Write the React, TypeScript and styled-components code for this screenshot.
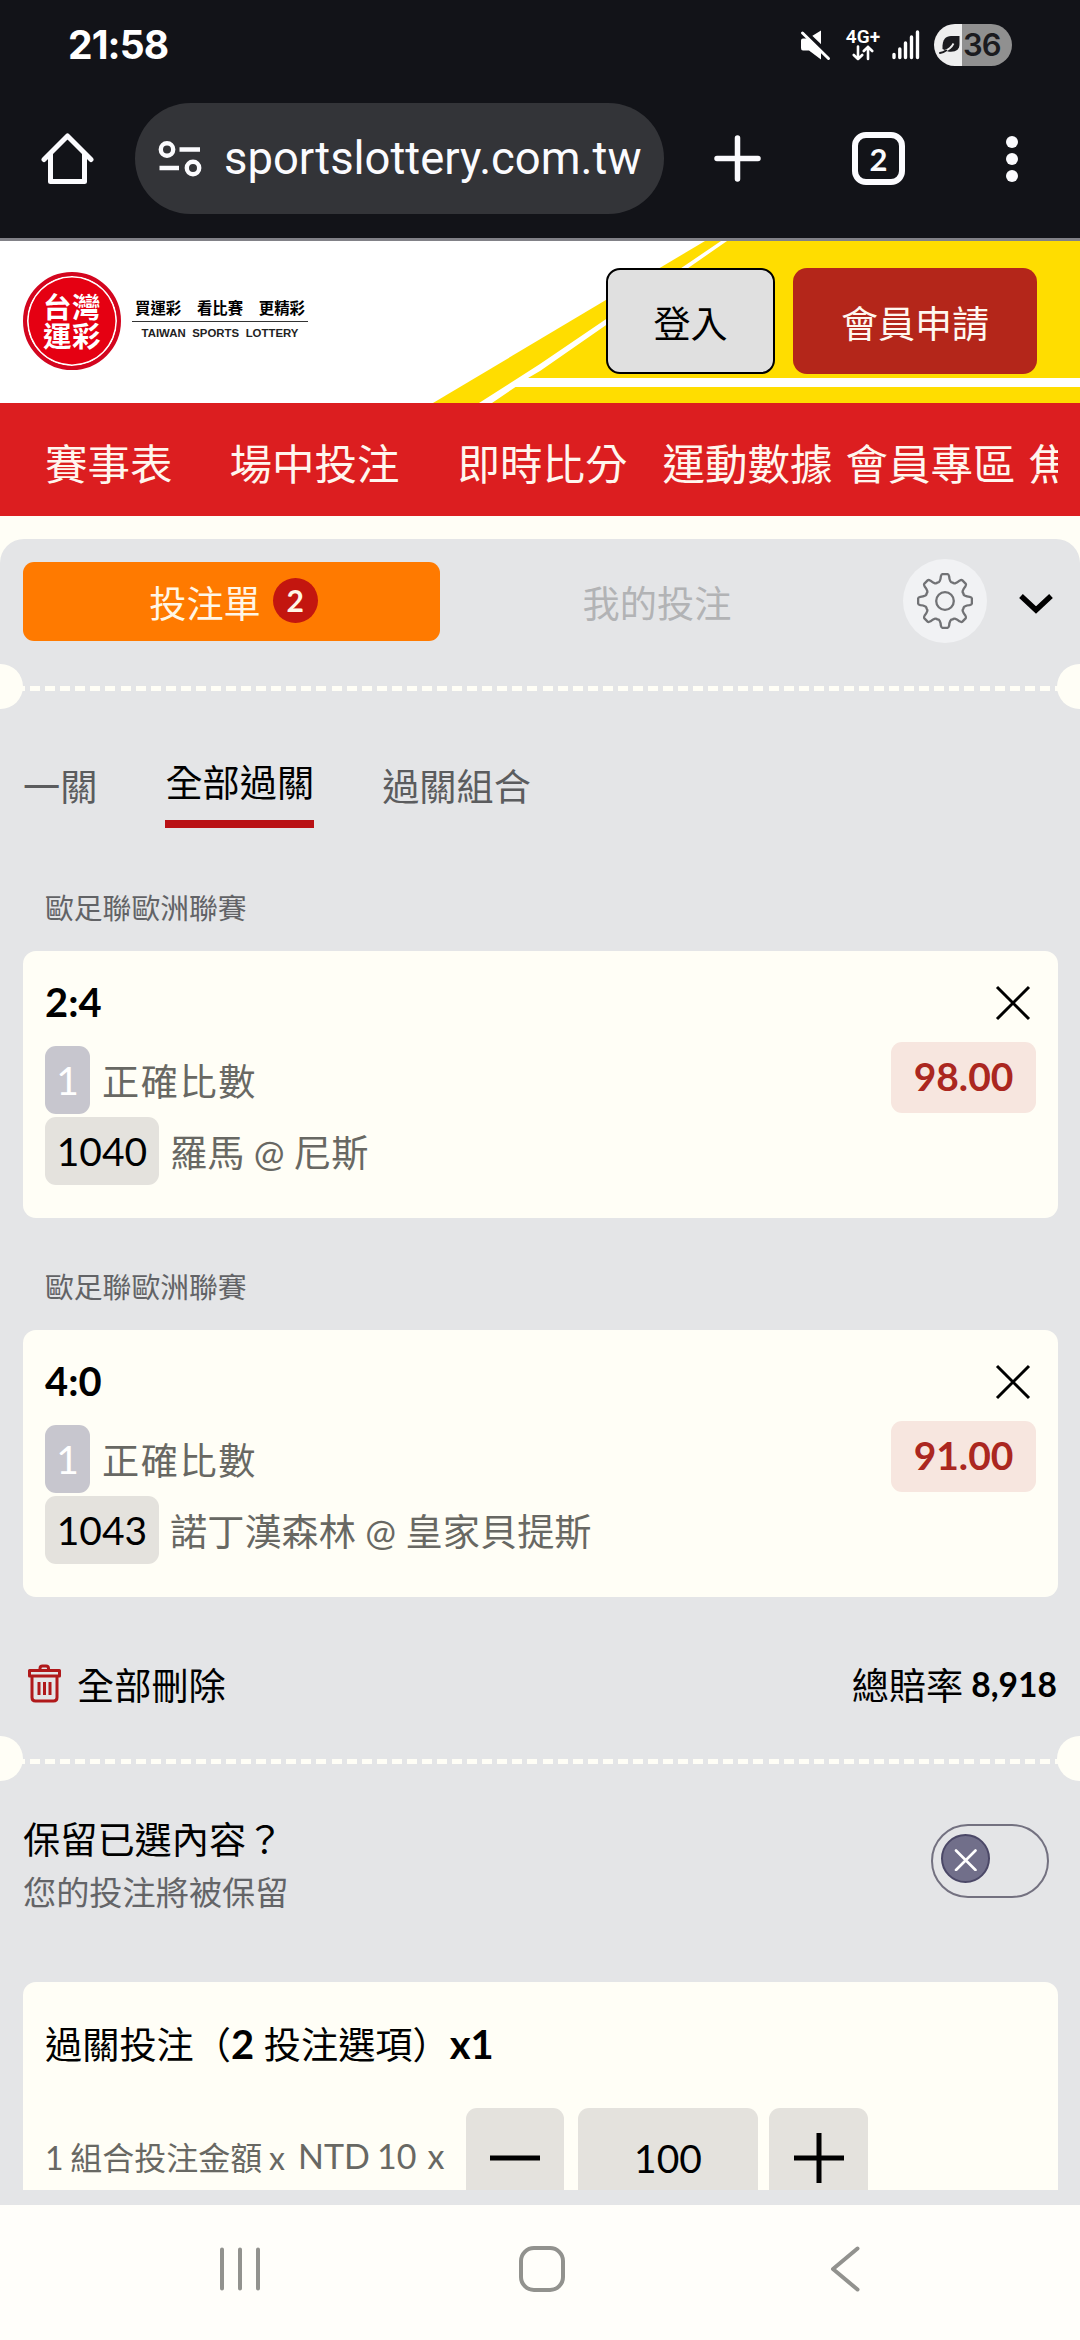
import React from "react";
import styled, { createGlobalStyle } from "styled-components";

const cjk = `"Noto Sans CJK TC", "Noto Sans CJK JP", sans-serif`;
const latin = `Lato, "Noto Sans CJK TC", sans-serif`;
const cream = "#fffef6";
const panel = "#e4e5e7";

const GlobalStyle = createGlobalStyle`
  * { box-sizing: border-box; }
  body { margin: 0; background: ${cream}; }
`;

const Screen = styled.div`
  width: 1080px;
  height: 2340px;
  overflow: hidden;
  display: flex;
  flex-direction: column;
  background: ${cream};
  font-family: ${cjk};
  color: #000;
`;

const Label = styled.span<{ $size: number; $color?: string; $bold?: boolean; $latin?: boolean; $track?: number }>`
  font-family: ${(p) => (p.$latin ? latin : cjk)};
  font-size: ${(p) => p.$size}px;
  font-weight: ${(p) => (p.$bold ? 700 : 400)};
  letter-spacing: ${(p) => p.$track ?? 0}px;
  line-height: 48px;
  color: ${(p) => p.$color ?? "#000"};
  white-space: nowrap;
  flex: none;
`;

/* ---------- device chrome ---------- */

const StatusBar = styled.div`
  height: 90px;
  flex: none;
  background: #121318;
  display: flex;
  align-items: center;
  justify-content: space-between;
  padding: 0 68px;
`;

const Clock = styled.span`
  font: 700 39px/48px Inter, sans-serif;
  letter-spacing: -0.9px;
  color: #fff;
`;

const StatusIcons = styled.div`
  display: flex;
  align-items: center;
`;

const Network = styled.div`
  display: flex;
  flex-direction: column;
  align-items: center;
  width: 36px;
  margin: 0 11px 0 14px;
  font: 600 19px/16px Roboto, sans-serif;
  color: #fff;
`;

const Battery = styled.div`
  width: 78px;
  height: 42px;
  margin-left: 14px;
  border-radius: 21px;
  background: linear-gradient(90deg, #eeeeee 28px, #909090 28px);
  display: flex;
  align-items: center;
  padding-left: 5px;
  font: 600 31px/42px Inter, sans-serif;
  letter-spacing: -1px;
  color: #1b1b1f;
`;

const BrowserBar = styled.div`
  height: 151px;
  flex: none;
  background: #121318;
  border-bottom: 3px solid #818187;
  display: flex;
  align-items: center;
  padding: 0 0 11px 41px;
`;

const AddressPill = styled.div`
  width: 529px;
  height: 111px;
  margin: 0 50px 0 41px;
  border-radius: 56px;
  background: #333438;
  display: flex;
  align-items: center;
  padding-left: 22px;
  gap: 22px;
`;

const Url = styled.span`
  font: 400 45.4px/56px Roboto, sans-serif;
  color: #fbfbfe;
  white-space: nowrap;
`;

const TabCount = styled.div`
  width: 53px;
  height: 53px;
  margin: 0 100px 0 91px;
  border: 6px solid #fbfbfe;
  border-radius: 14px;
  display: grid;
  place-items: center;
  font: 700 31px/40px Lato, sans-serif;
  color: #fbfbfe;
`;

const SystemNav = styled.div`
  height: 135px;
  flex: none;
  background: #fffefa;
  display: flex;
  align-items: center;
  padding: 0 0 7px 219px;
`;

const BackIcon = styled.svg`
  margin-left: 265px;
`;

const HomeSquare = styled.div`
  width: 46px;
  height: 46px;
  margin-left: 258px;
  border: 4px solid #92928e;
  border-radius: 15px;
`;

/* ---------- site header ---------- */

const Header = styled.header`
  height: 162px;
  flex: none;
  background: #fff;
  position: relative;
  display: flex;
  align-items: center;
  padding: 0 43px 2px 23px;
`;

const HeaderArt = styled.svg`
  position: absolute;
  inset: 0;
`;

const Seal = styled.div`
  width: 98px;
  height: 98px;
  border-radius: 50%;
  background: #e50012;
  border: 4px solid #d3061f;
  box-shadow: inset 0 0 0 1.6px #fff;
  display: grid;
  place-content: center;
  text-align: center;
  font: 700 28.5px/29.5px ${cjk};
  letter-spacing: 0.5px;
  color: #fff;
  padding-bottom: 2px;
`;

const Brand = styled.div`
  width: 176px;
  margin: 0 298px 6px 11px;
  display: flex;
  flex-direction: column;
  align-items: center;
`;

const Slogan = styled.div`
  width: 170px;
  height: 24px;
  display: flex;
  justify-content: space-between;
  font: 700 15.4px/20px ${cjk};
`;

const BrandName = styled.div`
  width: 176px;
  border-top: 1px solid #333;
  text-align: center;
  font: 700 11.4px/12px "Liberation Sans", sans-serif;
  padding-top: 5px;
  word-spacing: 3.4px;
  color: #222;
  white-space: nowrap;
`;

const HeaderButton = styled.button<{ $primary?: boolean }>`
  position: relative;
  width: ${(p) => (p.$primary ? 244 : 169)}px;
  height: 106px;
  margin-left: ${(p) => (p.$primary ? 18 : 0)}px;
  border: ${(p) => (p.$primary ? "none" : "2px solid #000")};
  border-radius: 14px;
  background: ${(p) => (p.$primary ? "#b4261a" : "#e0e0e0")};
  color: ${(p) => (p.$primary ? "#fff8f0" : "#000")};
  font: 400 37px/44px ${cjk};
  padding: 1px 0 0;
  white-space: nowrap;
`;

const MainNav = styled.nav`
  height: 113px;
  flex: none;
  background: #dc1e20;
  padding: 5px 22px 0 45px;
`;

const NavTrack = styled.div`
  height: 107px;
  overflow: hidden;
  display: flex;
  align-items: center;
`;

const NavItem = styled.a<{ $gap: number }>`
  flex: none;
  margin-right: ${(p) => p.$gap}px;
  font: 400 42.5px/56px ${cjk};
  color: #fff6ee;
`;

/* ---------- bet slip ---------- */

const Slip = styled.main`
  height: 1666px;
  flex: none;
  margin-top: 23px;
  overflow: hidden;
  border-radius: 24px 24px 0 0;
  background: ${panel};
  display: flex;
  flex-direction: column;
`;

const SlipTabs = styled.div`
  height: 125px;
  flex: none;
  display: flex;
  align-items: center;
  padding: 0 27px 1px 23px;
`;

const SlipTab = styled.div<{ $active?: boolean }>`
  width: ${(p) => (p.$active ? 417 : 434)}px;
  height: 79px;
  border-radius: 11px;
  background: ${(p) => (p.$active ? "#ff7a00" : "transparent")};
  display: flex;
  align-items: center;
  justify-content: center;
  gap: 12px;
  padding: 2px 0 0 ${(p) => (p.$active ? 4 : 0)}px;
`;

const CountBadge = styled.span`
  width: 45px;
  height: 45px;
  margin-top: -3px;
  border-radius: 50%;
  background: #c3160f;
  display: grid;
  place-items: center;
  font: 700 30px/45px Lato, sans-serif;
  color: #fff6e6;
`;

const GearButton = styled.div`
  width: 84px;
  height: 84px;
  margin: 0 32px 0 29px;
  border-radius: 50%;
  background: #f1f2f4;
  display: grid;
  place-items: center;
`;

const Chevron = styled.svg`
  margin-top: 5px;
`;

const Perforation = styled.div<{ $line: number }>`
  height: 45px;
  flex: none;
  position: relative;
  display: flex;
  justify-content: space-between;
  &::before {
    content: "";
    position: absolute;
    left: 0;
    right: 0;
    top: ${(p) => p.$line}px;
    height: 5px;
    background: repeating-linear-gradient(90deg, ${cream} 0 10px, transparent 10px 15.07px);
  }
`;

const Notch = styled.i<{ $right?: boolean }>`
  width: 23px;
  height: 45px;
  background: ${cream};
  border-radius: ${(p) => (p.$right ? "23px 0 0 23px" : "0 23px 23px 0")};
`;

const ModeTabs = styled.div`
  height: 119px;
  flex: none;
  display: flex;
  align-items: flex-end;
  gap: 68px;
  padding-left: 23px;
`;

const ModeTab = styled.div<{ $active?: boolean }>`
  height: 72px;
  border-bottom: 8px solid ${(p) => (p.$active ? "#b91115" : "transparent")};
  padding-top: ${(p) => (p.$active ? 1 : 5)}px;
`;

const League = styled.div<{ $first?: boolean }>`
  height: ${(p) => (p.$first ? 123 : 112)}px;
  flex: none;
  padding: ${(p) => (p.$first ? 55 : 44)}px 0 0 45px;
`;

const Card = styled.section`
  height: 267px;
  flex: none;
  margin: 0 22px 0 23px;
  border-radius: 13px;
  background: ${cream};
  padding: 27px 22px 0 22px;
  display: grid;
  grid-template-columns: 1fr auto;
  grid-template-rows: 68px 71px 70px;
`;

const Line = styled.div<{ $gap: number }>`
  display: flex;
  align-items: flex-start;
  gap: ${(p) => p.$gap}px;
`;

const CloseIcon = styled.svg`
  margin: 7px 5px 0 auto;
`;

const Tag = styled.span<{ $muted?: boolean }>`
  width: ${(p) => (p.$muted ? 45 : 114)}px;
  height: 68px;
  border-radius: 11px;
  background: ${(p) => (p.$muted ? "#c7c6ce" : "#e4e2dd")};
  color: ${(p) => (p.$muted ? "#fff" : "#000")};
  font: 400 39px/68px Lato, sans-serif;
  text-align: center;
`;

const Odds = styled.span`
  width: 145px;
  height: 71px;
  margin-top: -4px;
  border-radius: 11px;
  background: #f7e6df;
  color: #ab2720;
  font: 700 39px/69px Lato, sans-serif;
  text-align: center;
`;

const TagText = styled.div`
  padding-top: 10px;
  display: flex;
  align-items: baseline;
`;

const Summary = styled.div`
  height: 139px;
  flex: none;
  display: flex;
  align-items: center;
  padding: 34px 23px 0 28px;
  gap: 16px;
`;

const TotalOdds = styled.div`
  margin-left: auto;
  display: flex;
  align-items: center;
  gap: 8px;
`;

const KeepRow = styled.div`
  height: 201px;
  flex: none;
  display: flex;
  padding: 31px 31px 0 23px;
  justify-content: space-between;
`;

const KeepText = styled.div`
  display: flex;
  flex-direction: column;
  gap: 5px;
  padding-top: 2px;
`;

const Toggle = styled.div`
  width: 118px;
  height: 74px;
  margin-top: 12px;
  border: 2px solid #737180;
  border-radius: 37px;
  padding: 8px;
`;

const Knob = styled.div`
  width: 49px;
  height: 49px;
  border: 2px solid #4b4867;
  border-radius: 50%;
  background: #716f8a;
  display: grid;
  place-items: center;
`;

const StakeCard = styled.section`
  height: 208px;
  flex: none;
  overflow: hidden;
  margin: 0 22px 0 23px;
  border-radius: 13px 13px 0 0;
  background: ${cream};
  padding: 37px 22px 0 22px;
`;

const StakeTitle = styled.div`
  height: 89px;
  display: flex;
  align-items: baseline;
`;

const StakeRow = styled.div`
  height: 100px;
  display: flex;
`;

const StakeText = styled.div<{ $width: number; $top: number }>`
  width: ${(p) => p.$width}px;
  padding-top: ${(p) => p.$top}px;
  flex: none;
  display: flex;
  gap: 11px;
  word-spacing: -1.5px;
`;

const StepButton = styled.div<{ $width: number; $gap?: number }>`
  width: ${(p) => p.$width}px;
  height: 100px;
  margin-right: ${(p) => p.$gap ?? 0}px;
  border-radius: 11px;
  background: #e4e2dd;
  display: grid;
  place-items: center;
  font: 400 39px/100px Lato, sans-serif;
`;

function gearPath() {
  const at = (deg: number, r: number) => {
    const a = (deg * Math.PI) / 180;
    return `${(29 + r * Math.sin(a)).toFixed(2)} ${(29 - r * Math.cos(a)).toFixed(2)}`;
  };
  let d = "";
  for (let i = 0; i < 8; i++) {
    const t = i * 45;
    d += `${i ? "L" : "M"}${at(t - 14.5, 20.8)}Q${at(t - 11.5, 22)} ${at(t - 9.5, 25)}Q${at(t - 7.5, 27)} ${at(t - 5.5, 27)}`;
    d += `L${at(t + 5.5, 27)}Q${at(t + 7.5, 27)} ${at(t + 9.5, 25)}Q${at(t + 11.5, 22)} ${at(t + 14.5, 20.8)}`;
    d += `Q${at(t + 18, 19.2)} ${at(t + 22.5, 20)}Q${at(t + 27, 19.2)} ${at(t + 30.5, 20.8)}`;
  }
  return d + "Z";
}

type Bet = { score: string; code: string; teams: [string, string]; odds: string };

const bets: Bet[] = [
  { score: "2:4", code: "1040", teams: ["羅馬", "尼斯"], odds: "98.00" },
  { score: "4:0", code: "1043", teams: ["諾丁漢森林", "皇家貝提斯"], odds: "91.00" },
];

const navItems: [string, number][] = [
  ["賽事表", 57],
  ["場中投注", 58],
  ["即時比分", 35],
  ["運動數據", 13],
  ["會員專區", 13],
  ["焦點新聞", 0],
];

function BetCard({ bet }: { bet: Bet }) {
  return (
    <Card>
      <Label $size={39.9} $bold $latin>{bet.score}</Label>
      <CloseIcon width="36" height="36" viewBox="0 0 36 36">
        <path d="M2 2 34 34M34 2 2 34" stroke="#000" strokeWidth="3" />
      </CloseIcon>
      <Line $gap={12}>
        <Tag $muted>1</Tag>
        <TagText><Label $size={37.2} $color="#686863" $track={1.6}>正確比數</Label></TagText>
      </Line>
      <Odds>{bet.odds}</Odds>
      <Line $gap={11}>
        <Tag>{bet.code}</Tag>
        <TagText>
          <Label $size={37.2} $color="#686863">{bet.teams[0]}</Label>
          <Label $size={36.8} $color="#686863" $latin>&nbsp;@&nbsp;</Label>
          <Label $size={37.2} $color="#686863">{bet.teams[1]}</Label>
        </TagText>
      </Line>
    </Card>
  );
}

export default function App() {
  return (
    <Screen>
      <GlobalStyle />
      <StatusBar>
        <Clock>21:58</Clock>
        <StatusIcons>
          <svg width="31" height="31" viewBox="0 0 31 31">
            <path d="M1 10.500Q1 8.500 3 8.500H8L21 0.500V29.500L9 20.500H3Q1 20.500 1 18Z" fill="#fff" />
            <path d="M3 0 31 27" stroke="#121318" strokeWidth="4.500" />
            <path d="M2.500 3 28.500 28.500" stroke="#fff" strokeWidth="3" strokeLinecap="round" />
          </svg>
          <Network>
            4G+
            <svg width="22" height="16" viewBox="0 0 22 16" fill="none" stroke="#fff" strokeWidth="2.600" strokeLinecap="round" strokeLinejoin="round">
              <path d="M6 1.500V14M1.800 10 6 14.200 10.200 10M16 14V1.800M11.800 6 16 1.800 20.200 6" />
            </svg>
          </Network>
          <svg width="28" height="30" viewBox="0 0 28 30" stroke="#fff" strokeWidth="3.400" strokeLinecap="round">
            <path d="M2 24.500V27.500M7.800 19V27.500M13.500 13V27.500M19.500 7V27.500M25.500 2V27.500" />
          </svg>
          <Battery>
            <svg width="24" height="20" viewBox="0 0 24 20">
              <path d="M3.500 14C3 4 7 1 12 1H20.500V9C20.500 14.500 17 17.500 9 16.500Z" fill="#1b1b1f" />
              <path d="M6 15.500C10 14.500 13 11.500 14.500 8.500" stroke="#eee" strokeWidth="1.800" fill="none" />
              <path d="M1 18C3 17.800 5 17.200 7 15.500" stroke="#1b1b1f" strokeWidth="2" fill="none" strokeLinecap="round" />
            </svg>
            36
          </Battery>
        </StatusIcons>
      </StatusBar>

      <BrowserBar>
        <svg width="53" height="53" viewBox="0 0 53 53" fill="none" stroke="#fbfbfe" strokeWidth="5" strokeLinejoin="round" strokeLinecap="round">
          <path d="M3 27.500 26.500 4 50 27.500M9.500 22V49.500H43.500V22" />
        </svg>
        <AddressPill>
          <svg width="45" height="38" viewBox="0 0 45 38" fill="none" stroke="#fbfbfe" strokeWidth="4.400">
            <circle cx="10" cy="9.500" r="6.200" />
            <path d="M22.500 9.500H43M2.500 28H22" />
            <circle cx="36" cy="28" r="6.200" />
          </svg>
          <Url>sportslottery.com.tw</Url>
        </AddressPill>
        <svg width="47" height="47" viewBox="0 0 47 47" stroke="#fbfbfe" strokeWidth="5.500" strokeLinecap="round">
          <path d="M23.500 3V44M3 23.500H44" />
        </svg>
        <TabCount>2</TabCount>
        <svg width="14" height="48" viewBox="0 0 14 48" fill="#fbfbfe">
          <circle cx="7" cy="7" r="6" />
          <circle cx="7" cy="24" r="6" />
          <circle cx="7" cy="41" r="6" />
        </svg>
      </BrowserBar>

      <Header>
        <HeaderArt width="1080" height="162" viewBox="0 0 1080 162">
          <path d="M433 162 705 0H1080V162Z" fill="#ffdd00" />
          <path d="M479 162 540 123 721 0H727L540 130 528 137H1080V146H515.500L492 162Z" fill="#fff" />
        </HeaderArt>
        <Seal>
          <span>台灣</span>
          <span>運彩</span>
        </Seal>
        <Brand>
          <Slogan>
            <span>買運彩</span>
            <span>看比賽</span>
            <span>更精彩</span>
          </Slogan>
          <BrandName>TAIWAN SPORTS LOTTERY</BrandName>
        </Brand>
        <HeaderButton>登入</HeaderButton>
        <HeaderButton $primary>會員申請</HeaderButton>
      </Header>

      <MainNav>
        <NavTrack>
          {navItems.map(([text, gap]) => (
            <NavItem key={text} $gap={gap}>{text}</NavItem>
          ))}
        </NavTrack>
      </MainNav>

      <Slip>
        <SlipTabs>
          <SlipTab $active>
            <Label $size={37.2} $color="#fff6e6">投注單</Label>
            <CountBadge>2</CountBadge>
          </SlipTab>
          <SlipTab>
            <Label $size={37.2} $color="#b2b3b5">我的投注</Label>
          </SlipTab>
          <GearButton>
            <svg width="58" height="58" viewBox="0 0 58 58" fill="none" stroke="#717275" strokeWidth="2.300" strokeLinejoin="round">
              <path d={gearPath()} />
              <circle cx="29" cy="29" r="8.800" />
            </svg>
          </GearButton>
          <Chevron width="34" height="20" viewBox="0 0 34 20" fill="none" stroke="#000" strokeWidth="5.400">
            <path d="M2 2 17 16 32 2" />
          </Chevron>
        </SlipTabs>

        <Perforation $line={22}><Notch /><Notch $right /></Perforation>

        <ModeTabs>
          <ModeTab><Label $size={37.2} $color="#5b5c5e">一關</Label></ModeTab>
          <ModeTab $active><Label $size={37.2}>全部過關</Label></ModeTab>
          <ModeTab><Label $size={37.2} $color="#5b5c5e">過關組合</Label></ModeTab>
        </ModeTabs>

        {bets.map((bet, i) => (
          <React.Fragment key={bet.code}>
            <League $first={i === 0}>
              <Label $size={28.8} $color="#626366">歐足聯歐洲聯賽</Label>
            </League>
            <BetCard bet={bet} />
          </React.Fragment>
        ))}

        <Summary>
          <svg width="33" height="39" viewBox="0 0 33 39" fill="none" stroke="#b0191b" strokeWidth="3" strokeLinejoin="round">
            <path d="M12 6V4.500Q12 2 14.500 2H18Q20.500 2 20.500 4.500V6M1.500 6.500H31.500V12H1.500ZM4 12.500V33.500Q4 37 7.500 37H25.500Q29 37 29 33.500V12.500M11 18V31M16.500 18V31M22 18V31" />
          </svg>
          <Label $size={37.2}>全部刪除</Label>
          <TotalOdds>
            <Label $size={37.2}>總賠率</Label>
            <Label $size={33.6} $bold $latin>8,918</Label>
          </TotalOdds>
        </Summary>

        <Perforation $line={23}><Notch /><Notch $right /></Perforation>

        <KeepRow>
          <KeepText>
            <Label $size={37.2}>保留已選內容？</Label>
            <Label $size={33.2} $color="#636467">您的投注將被保留</Label>
          </KeepText>
          <Toggle>
            <Knob>
              <svg width="24" height="24" viewBox="0 0 24 24" stroke="#fff" strokeWidth="2.600" strokeLinecap="round">
                <path d="M2 3.500 21.500 23M21.500 3.500 2 23" />
              </svg>
            </Knob>
          </Toggle>
        </KeepRow>

        <StakeCard>
          <StakeTitle>
            <Label $size={37.2}>過關投注（</Label>
            <Label $size={39.9} $bold $latin>2&nbsp;</Label>
            <Label $size={37.2}>投注選項）</Label>
            <Label $size={39.9} $bold $latin>x1</Label>
          </StakeTitle>
          <StakeRow>
            <StakeText $width={253} $top={26}>
              <Label $size={32} $color="#686863" $latin>1 組合投注金額 x</Label>
            </StakeText>
            <StakeText $width={168} $top={24}>
              <Label $size={34} $color="#686863" $latin>NTD 10</Label>
              <Label $size={34} $color="#686863" $latin>x</Label>
            </StakeText>
            <StepButton $width={98} $gap={14}>
              <svg width="50" height="52" viewBox="0 0 50 52" stroke="#000" strokeWidth="5"><path d="M0 26H50" /></svg>
            </StepButton>
            <StepButton $width={180} $gap={11}>100</StepButton>
            <StepButton $width={99}>
              <svg width="50" height="52" viewBox="0 0 50 52" stroke="#000" strokeWidth="5"><path d="M0 26H50M25 1V51" /></svg>
            </StepButton>
          </StakeRow>
        </StakeCard>
      </Slip>

      <SystemNav>
        <svg width="42" height="44" viewBox="0 0 42 44" stroke="#92928e" strokeWidth="4" strokeLinecap="round">
          <path d="M3 2.500V41.500M21 2.500V41.500M39 2.500V41.500" />
        </svg>
        <HomeSquare />
        <BackIcon width="31" height="46" viewBox="0 0 31 46" fill="none" stroke="#92928e" strokeWidth="4" strokeLinecap="round" strokeLinejoin="round">
          <path d="M27.500 2.500 3 23 27.500 43.500" />
        </BackIcon>
      </SystemNav>
    </Screen>
  );
}
